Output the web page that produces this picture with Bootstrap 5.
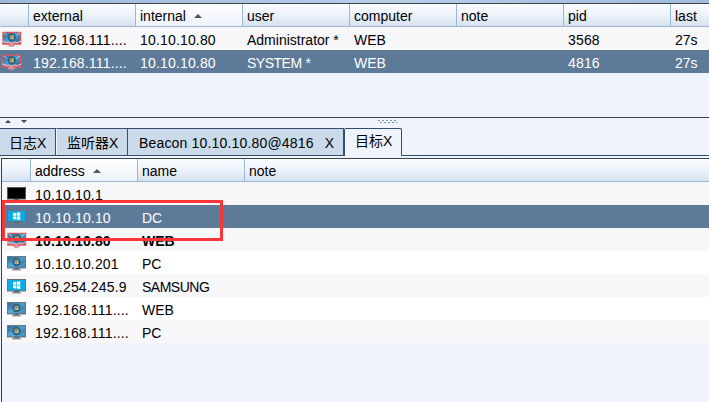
<!DOCTYPE html>
<html lang="zh-CN">
<head>
<meta charset="utf-8">
<title>Beacon console</title>
<link href="https://cdn.jsdelivr.net/npm/bootstrap@5.3.0/dist/css/bootstrap.min.css" rel="stylesheet">
<style>
body{width:709px;height:402px;background:#eff3fb;color:#000;font:14px/23px "Liberation Sans","Noto Sans CJK SC",sans-serif;white-space:nowrap}
.titlestrip{height:3px;background:linear-gradient(90deg,#9db9dc,#b9cde6 55%,#a0bbdd)}
.pane-top{height:115px;border-top:1px solid #3b414b;border-bottom:1px solid #3b414b}
.grid-table{table-layout:fixed;border-collapse:separate;border-spacing:0}
.grid-table th{height:23px;padding:2px 0 0 5px;line-height:20px;font-weight:400;border-right:1px solid #9ab8d6;border-bottom:1px solid #9ab8d6;background:linear-gradient(#fafcff,#eef4fb 45%,#d6e2ef)}
.grid-table th.sorted{background:linear-gradient(#fff,#edf2fa)}
.grid-table th:last-child{border-right:0}
.grid-table td{height:23px;padding:3px 0 0 5px;line-height:20px;overflow:hidden}
.grid-table th:not(:first-child),.grid-table td:not(:first-child){padding-left:4px}
.grid-table tr:nth-child(odd) td{background:#f7f7f9}
.grid-table tr:nth-child(even) td{background:#fff}
.grid-table tr.chosen td{background:#5e7a99;color:#fff}
.grid-table td svg{display:block;margin-top:-3px}
.num{letter-spacing:.17px}
.caps{letter-spacing:-.5px}
.arrow{display:inline-block;border:4px solid transparent;border-top:0;border-bottom:4px solid #555;margin-left:8px;vertical-align:3px}
.splitter{height:10px}
.tabstrip{height:28px;border-bottom:1px solid #334e6c}
.tabitem{height:27px;line-height:28px;background:#cbdaea;border-top:1px solid #334e6c;border-right:1px solid #334e6c}
.tabitem.current{height:28px;line-height:24px;background:#eff3fb;border-left:1px solid #334e6c;border-radius:2px 2px 0 0}
.han{font-family:"Noto Sans CJK SC",sans-serif;line-height:1}
.gap-line{border-left:1px solid #f3f7fb}
.pane-low{margin:2px 0 0 1px;height:244px;border-top:1px solid #3b414b;border-left:1px solid #3b414b}
.callout{left:2px;top:200px;width:221px;height:41px;border:3px solid #fb3637}
</style>
<script src="https://cdn.jsdelivr.net/npm/bootstrap@5.3.0/dist/js/bootstrap.bundle.min.js"></script>
</head>
<body class="overflow-hidden position-relative">
<svg width="0" height="0" class="position-absolute">
<defs>
<linearGradient id="sky" x2="1" y2="1"><stop stop-color="#2b6b98"/><stop offset=".5" stop-color="#4d9fcb"/><stop offset="1" stop-color="#2b6088"/></linearGradient>
<symbol id="orb" viewBox="0 0 10 10"><circle cx="5" cy="5" r="4.700" fill="#2f5f80"/><path d="M2.500 3l2.300-.7v2.500H2.500z" fill="#d98148"/><path d="M5 2.300l2.300.7v1.800H5z" fill="#9cc779"/><path d="M2.500 5h2.300v2.500L2.500 7z" fill="#68b8e8"/><path d="M5 5h2.300v2L5 7.500z" fill="#edcf63"/></symbol>
<symbol id="pc" viewBox="0 0 20 16"><path d="M0 1h19v12.500H0z" fill="#6b7780"/><path d="M1 2h17v10.300H1z" fill="url(#sky)"/><path d="M1 9q5-3 8.500 0t8.500-2v5.300H1z" fill="#5fb4db" opacity=".5"/><path d="M7 13h5v1.500H7z" fill="#5e646b"/><path d="M5 14.200h9v1.200H5z" fill="#7c838a"/><use href="#orb" x="5" y="2.500" width="9" height="9"/></symbol>
<symbol id="win8" viewBox="0 0 20 16"><path d="M0 1h19v12.500H0z" fill="#6b7278"/><path d="M1 2h17v10.300H1z" fill="#08adea"/><path d="M6 4.300l3-.5v3H6zM9.600 3.700l3.600-.5v3.600H9.600zM6 7.400h3v3l-3-.5zM9.600 7.400h3.600V11l-3.600-.5z" fill="#fff"/><path d="M7 13h5v1.500H7z" fill="#555b61"/><path d="M5 14.200h9v1.200H5z" fill="#777d83"/></symbol>
<symbol id="black" viewBox="0 0 20 16"><path d="M0 1h19v12.500H0z" fill="#555"/><path d="M1 2h17v10.500H1z" fill="#000"/><path d="M7 13h5v1.500H7z" fill="#606060"/><path d="M5 14.200h9v1.200H5z" fill="#888"/></symbol>
<symbol id="owned" viewBox="0 0 20 16"><path d="M.3.800h19v13h-19z" fill="#db5965"/><path d="M1.500 2h16.500v9.500H1.500z" fill="url(#sky)"/><path d="M5 13h9l-2.500 2.700h-4z" fill="#df8a93"/><use href="#orb" x="5.500" y="2" width="8.500" height="8.500"/><path d="M.3 10l4 1.500 2-.5 3 1.500 3-1.500 3 .5 3.700-1.500" fill="none" stroke="#f1d4dc"/><path d="M1.500 2l3.500 2M18 2l-3.500 2" stroke="#b8c6d5"/></symbol>
</defs>
</svg>
<div class="titlestrip"></div>
<section class="pane-top">
<table class="grid-table w-100">
<colgroup><col style="width:29px"><col style="width:107px"><col style="width:107px"><col style="width:107px"><col style="width:107px"><col style="width:107px"><col style="width:107px"><col></colgroup>
<thead><tr><th></th><th>external</th><th class="sorted">internal<i class="arrow"></i></th><th>user</th><th>computer</th><th>note</th><th>pid</th><th>last</th></tr></thead>
<tbody>
<tr><td class="ps-0"><svg width="22" height="16"><use href="#owned" x="2" width="20" height="16"/></svg></td><td class="num">192.168.111....</td><td class="num">10.10.10.80</td><td>Administrator *</td><td>WEB</td><td></td><td class="num">3568</td><td>27s</td></tr>
<tr class="chosen"><td class="ps-0"><svg width="22" height="16"><use href="#owned" x="2" width="20" height="16"/></svg></td><td class="num">192.168.111....</td><td class="num">10.10.10.80</td><td><span class="caps">SYSTEM</span> *</td><td>WEB</td><td></td><td class="num">4816</td><td>27s</td></tr>
</tbody>
</table>
</section>
<div class="splitter"><svg class="d-block" width="709" height="10"><path d="M5 5l3-3 3 3zM21 2h6l-3 3z" fill="#444"/><path d="M378 2.500h19M380 4.500h17" stroke="#7794b5" stroke-dasharray="2 2"/></svg></div>
<nav class="tabstrip d-flex">
<div class="tabitem" style="width:56px;padding-left:9px"><span class="han">日志</span>X</div>
<div class="tabitem gap-line" style="width:72px;padding-left:10px"><span class="han">监听器</span>X</div>
<div class="tabitem d-flex justify-content-between" style="width:216px;padding:0 9px 0 11px"><span class="num">Beacon 10.10.10.80@4816</span><span>X</span></div>
<div class="tabitem current" style="width:58px;padding-left:10px"><span class="han">目标</span>X</div>
</nav>
<section class="pane-low">
<table class="grid-table w-100">
<colgroup><col style="width:29px"><col style="width:107px"><col style="width:107px"><col></colgroup>
<thead><tr><th></th><th class="sorted">address<i class="arrow"></i></th><th>name</th><th>note</th></tr></thead>
<tbody>
<tr><td><svg width="20" height="16"><use href="#black"/></svg></td><td class="num">10.10.10.1</td><td></td><td></td></tr>
<tr class="chosen"><td><svg width="20" height="16"><use href="#win8"/></svg></td><td class="num">10.10.10.10</td><td>DC</td><td></td></tr>
<tr class="fw-bold"><td><svg width="20" height="16"><use href="#owned"/></svg></td><td class="num">10.10.10.80</td><td>WEB</td><td></td></tr>
<tr><td><svg width="20" height="16"><use href="#pc"/></svg></td><td class="num">10.10.10.201</td><td>PC</td><td></td></tr>
<tr><td><svg width="20" height="16"><use href="#win8"/></svg></td><td class="num">169.254.245.9</td><td class="caps">SAMSUNG</td><td></td></tr>
<tr><td><svg width="20" height="16"><use href="#pc"/></svg></td><td class="num">192.168.111....</td><td>WEB</td><td></td></tr>
<tr><td><svg width="20" height="16"><use href="#pc"/></svg></td><td class="num">192.168.111....</td><td>PC</td><td></td></tr>
</tbody>
</table>
</section>
<div class="callout position-absolute"></div>
</body>
</html>
